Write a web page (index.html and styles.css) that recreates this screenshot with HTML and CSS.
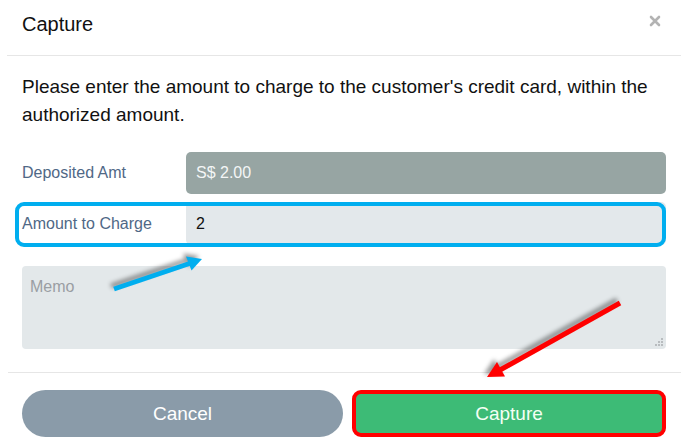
FILE: index.html
```html
<!DOCTYPE html>
<html lang="en">
<head>
    <meta charset="UTF-8">
    <meta name="viewport" content="width=device-width, initial-scale=1.0">
    <title>Capture</title>
    <link rel="stylesheet" href="styles.css">
</head>
<body>
    <div class="modal">
        <div class="modal-header">
            <h2>Capture</h2>
            <span class="close">
                <svg width="12" height="12" viewBox="0 0 12 12"><path d="M2 2 L10 10 M10 2 L2 10" stroke="#b3b3b3" stroke-width="2.6" stroke-linecap="round"/></svg>
            </span>
        </div>

        <div class="modal-body">
            <p class="intro">Please enter the amount to charge to the customer's credit card, within the authorized amount.</p>

            <div class="row">
                <label>Deposited Amt</label>
                <div class="field field-disabled">S$ 2.00</div>
            </div>
            <div class="row row-charge">
                <label>Amount to Charge</label>
                <div class="field field-input">2</div>
                <span class="highlight"></span>
            </div>
            <div class="memo">
                Memo
                <svg class="grip" width="8" height="8" viewBox="0 0 8 8" fill="#b8bcbf">
                    <rect x="6" y="0" width="2" height="2"/>
                    <rect x="3" y="3" width="2" height="2"/><rect x="6" y="3" width="2" height="2"/>
                    <rect x="0" y="6" width="2" height="2"/><rect x="3" y="6" width="2" height="2"/><rect x="6" y="6" width="2" height="2"/>
                </svg>
            </div>
        </div>

        <div class="modal-footer">
            <button class="btn btn-cancel">Cancel</button>
            <button class="btn btn-capture">Capture</button>
        </div>

        <!-- annotation arrows -->
        <svg class="arrows" width="681" height="448" viewBox="0 0 681 448">
            <g class="arrow-blue">
                <line x1="114" y1="289" x2="191" y2="263" stroke="#00aeef" stroke-width="5"/>
                <polygon points="202,259 191.5,270.5 186,256.5" fill="#00aeef"/>
            </g>
            <g class="arrow-red">
                <line x1="620" y1="303" x2="500" y2="370" stroke="#ff0000" stroke-width="5"/>
                <polygon points="487,377 505,376.5 497,362" fill="#ff0000"/>
            </g>
        </svg>
    </div>
</body>
</html>
```

FILE: styles.css
```css
body {
    margin: 0;
    font-family: "Liberation Sans", Arial, sans-serif;
    background-color: #fff;
    color: #111;
}
.modal {
    position: relative;
    width: 681px;
    height: 448px;
    overflow: hidden;
}
.modal-header {
    display: flex;
    justify-content: space-between;
    align-items: flex-start;
    height: 56px;
    margin-left: 7px;
    padding: 12px 20px 0 15px;
    box-sizing: border-box;
    border-bottom: 1px solid #e6e6e6;
}
.modal-header h2 {
    margin: 0;
    font-size: 20px;
    font-weight: normal;
    line-height: 24px;
}
.close {
    margin-top: 1px;
}
.modal-body {
    padding: 17px 15px 0 22px;
}
.intro {
    margin: 0;
    font-size: 19px;
    line-height: 28px;
}
.row {
    display: flex;
    align-items: center;
    margin-top: 23px;
}
.row label {
    width: 164px;
    font-size: 16px;
    color: #506886;
}
.field {
    width: 480px;
    height: 42px;
    box-sizing: border-box;
    padding: 0 10px;
    border-radius: 5px;
    font-size: 16px;
    line-height: 42px;
}
.field-disabled {
    background-color: #97a5a3;
    color: #f4f6f6;
}
.row-charge {
    position: relative;
    margin-top: 8px;
}
.field-input {
    height: 43px;
    line-height: 43px;
    background-color: #e3e8eb;
    color: #111;
}
.highlight {
    position: absolute;
    left: -7px;
    top: 0;
    right: 0;
    bottom: -2px;
    border: 4px solid #00aeef;
    border-radius: 9px;
}
.memo {
    position: relative;
    margin-top: 21px;
    width: 644px;
    height: 83px;
    box-sizing: border-box;
    padding: 12px 8px;
    border-radius: 4px;
    background-color: #e3e8ea;
    font-size: 16px;
    color: #9a9ea3;
}
.grip {
    position: absolute;
    right: 3px;
    bottom: 3px;
}
.modal-footer {
    display: flex;
    gap: 9px;
    margin: 23px 0 0 8px;
    padding: 17px 0 0 14px;
    border-top: 1px solid #e6e6e6;
}
.btn {
    height: 47px;
    border: none;
    font-family: "Liberation Sans", Arial, sans-serif;
    font-size: 19px;
    color: #fff;
    cursor: pointer;
}
.btn-cancel {
    width: 321px;
    border-radius: 24px;
    background-color: #8a9ba9;
}
.btn-capture {
    width: 314px;
    border: 4px solid #ff0000;
    border-radius: 9px;
    background-color: #3dbb76;
    color: #f4fff4;
}
.arrows {
    position: absolute;
    left: 0;
    top: 0;
    pointer-events: none;
}
.arrows g {
    filter: drop-shadow(-3px -3px 2px rgba(0, 0, 0, 0.4));
}
```
